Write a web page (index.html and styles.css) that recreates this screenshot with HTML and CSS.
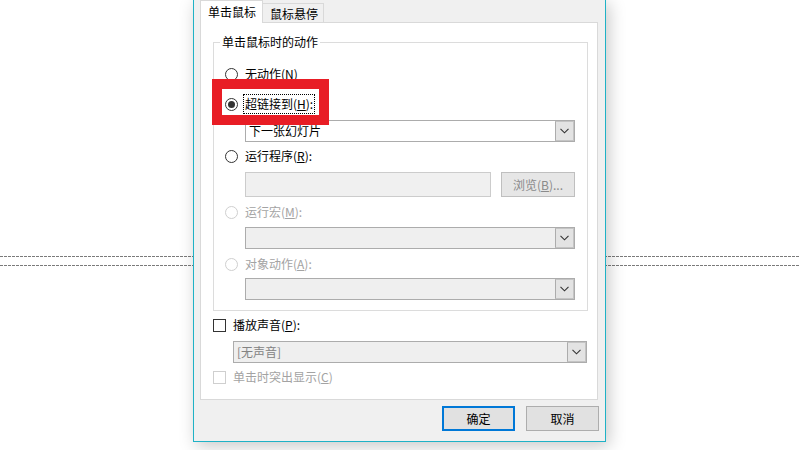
FILE: index.html
```html
<!DOCTYPE html>
<html lang="zh-CN">
<head>
<meta charset="utf-8">
<title>动作设置</title>
<link rel="stylesheet" href="styles.css">
</head>
<body>
<div class="slide">
  <div class="dash dash-top"></div>
  <div class="dash dash-bottom"></div>
</div>

<div class="dialog">
  <div class="tabs">
    <div class="tab tab-active">单击鼠标</div>
    <div class="tab">鼠标悬停</div>
  </div>
  <div class="panel">
    <div class="group">
      <span class="legend">单击鼠标时的动作</span>

      <div class="opt first"><span class="radio"></span><span class="lbl">无动作(<u>N</u>)</span></div>

      <div class="opt gap10"><span class="radio checked"></span><span class="lbl focus">超链接到(<u>H</u>):</span></div>
      <div class="combo indent gap6">
        <span class="combo-text">下一张幻灯片</span>
        <span class="arrow"><svg width="9" height="6" viewBox="0 0 9 6"><path d="M0.5 0.8 L4.5 4.8 L8.5 0.8" fill="none" stroke="#333" stroke-width="1.1"/></svg></span>
      </div>

      <div class="opt gap4"><span class="radio"></span><span class="lbl">运行程序(<u>R</u>):</span></div>
      <div class="field-row indent gap6">
        <span class="input"></span>
        <span class="browse">浏览(<u>B</u>)...</span>
      </div>

      <div class="opt gap5 disabled"><span class="radio"></span><span class="lbl">运行宏(<u>M</u>):</span></div>
      <div class="combo off indent gap5">
        <span class="combo-text"></span>
        <span class="arrow"><svg width="9" height="6" viewBox="0 0 9 6"><path d="M0.5 0.8 L4.5 4.8 L8.5 0.8" fill="none" stroke="#333" stroke-width="1.1"/></svg></span>
      </div>

      <div class="opt gap5 disabled"><span class="radio"></span><span class="lbl">对象动作(<u>A</u>):</span></div>
      <div class="combo off indent gap4">
        <span class="combo-text"></span>
        <span class="arrow"><svg width="9" height="6" viewBox="0 0 9 6"><path d="M0.5 0.8 L4.5 4.8 L8.5 0.8" fill="none" stroke="#333" stroke-width="1.1"/></svg></span>
      </div>
    </div>

    <div class="opt gap4"><span class="check"></span><span class="lbl">播放声音(<u>P</u>):</span></div>
    <div class="combo off sound gap6">
      <span class="combo-text muted">[无声音]</span>
      <span class="arrow"><svg width="9" height="6" viewBox="0 0 9 6"><path d="M0.5 0.8 L4.5 4.8 L8.5 0.8" fill="none" stroke="#333" stroke-width="1.1"/></svg></span>
    </div>
    <div class="opt gap4 disabled"><span class="check"></span><span class="lbl">单击时突出显示(<u>C</u>)</span></div>
  </div>

  <div class="buttons">
    <span class="btn default">确定</span>
    <span class="btn">取消</span>
  </div>
</div>

<div class="highlight"></div>
</body>
</html>
```

FILE: styles.css
```css
* { box-sizing: border-box; }

html, body {
  margin: 0;
  padding: 0;
  width: 800px;
  height: 450px;
  overflow: hidden;
  background: #ffffff;
  font-family: "Noto Sans CJK SC", "Noto Sans", sans-serif;
  font-size: 12px;
  color: #000;
}

u { text-decoration: underline; text-underline-offset: 1px; }

/* slide canvas behind the dialog */
.slide {
  position: absolute;
  left: 0; top: 0;
  width: 800px; height: 450px;
}
.dash {
  position: absolute;
  left: 0;
  width: 800px;
  height: 1px;
  background: repeating-linear-gradient(90deg, #7a7a7a 0 3px, transparent 3px 4px);
}
.dash-top { top: 256px; }
.dash-bottom { top: 265px; }

/* dialog window */
.dialog {
  position: absolute;
  left: 193px;
  top: -1px;
  width: 413px;
  height: 443px;
  border: 1px solid #1fb2c6;
  background: #f0f0f0;
  padding: 0 7px 0 6px;
  box-shadow: 3px 4px 16px rgba(0, 0, 0, 0.22);
  display: flex;
  flex-direction: column;
}

.tabs {
  display: flex;
  align-items: flex-end;
  height: 22px;
}
.tab {
  height: 19px;
  width: 62px;
  border: 1px solid #d9d9d9;
  border-bottom: none;
  padding: 1px 0 0 7px;
  line-height: 17px;
  background: #f0f0f0;
  margin-left: -1px;
}
.tab-active {
  position: relative;
  z-index: 1;
  height: 23px;
  width: 63px;
  margin-left: 0;
  margin-bottom: -1px;
  background: #fff;
  line-height: 20px;
  padding: 1px 0 0 7px;
}

.panel {
  height: 378px;
  border: 1px solid #d9d9d9;
  background: #fff;
  padding: 19px 9px 0 12px;
}

.group {
  position: relative;
  border: 1px solid #dcdcdc;
  padding: 21px 0 10px 11px;
}
.legend {
  position: absolute;
  left: 6px;
  top: -9px;
  padding: 0 2px;
  line-height: 16px;
  background: #fff;
}

.opt {
  display: flex;
  align-items: center;
  height: 20px;
}
.gap4 { margin-top: 4px; }
.gap5 { margin-top: 5px; }
.gap6 { margin-top: 6px; }
.gap10 { margin-top: 10px; }

.radio {
  width: 13px;
  height: 13px;
  border: 1px solid #333;
  border-radius: 50%;
  background: #fff;
  margin-right: 7px;
  flex: none;
  display: flex;
  align-items: center;
  justify-content: center;
}
.radio.checked::after {
  content: "";
  width: 7px;
  height: 7px;
  border-radius: 50%;
  background: #333;
}
.check {
  width: 13px;
  height: 13px;
  border: 1px solid #333;
  background: #fff;
  margin-right: 7px;
  flex: none;
}
.lbl { line-height: 16px; white-space: nowrap; }
.lbl.focus {
  border: 1px dotted #000;
  padding: 1px 1px 1px 1px;
  margin-left: -2px;
}

.disabled .lbl { color: #a3a3a3; }
.disabled .radio, .disabled .check { border-color: #cfcfcf; }

.indent { margin-left: 20px; }

.combo {
  width: 330px;
  height: 22px;
  border: 1px solid #acacac;
  background: #fff;
  display: flex;
}
.combo.off { background: #efefef; }
.combo.sound { width: 354px; margin-left: 20px; }
.combo-text {
  flex: 1;
  padding-left: 3px;
  line-height: 20px;
}
.combo-text.muted { color: #838383; }
.arrow {
  width: 19px;
  border: 1px solid #c4c4c4;
  border-left-color: #acacac;
  background: #e3e3e3;
  display: flex;
  align-items: center;
  justify-content: center;
}

.field-row {
  display: flex;
  gap: 10px;
  height: 25px;
}
.input {
  width: 246px;
  border: 1px solid #cccccc;
  background: #f0f0f0;
}
.browse {
  width: 74px;
  border: 1px solid #bfbfbf;
  background: #e6e6e6;
  color: #8a8a8a;
  text-align: center;
  line-height: 23px;
}

.buttons {
  display: flex;
  justify-content: flex-end;
  gap: 11px;
  margin-top: 6px;
  margin-right: -1px;
}
.btn {
  width: 73px;
  height: 25px;
  border: 1px solid #adadad;
  background: #e1e1e1;
  text-align: center;
  line-height: 23px;
}
.btn.default {
  border: 2px solid #0078d7;
  line-height: 21px;
}

/* red annotation box over the screenshot */
.highlight {
  position: absolute;
  left: 212px;
  top: 79px;
  width: 117px;
  height: 46px;
  border: 10px solid #e81d25;
}
```
